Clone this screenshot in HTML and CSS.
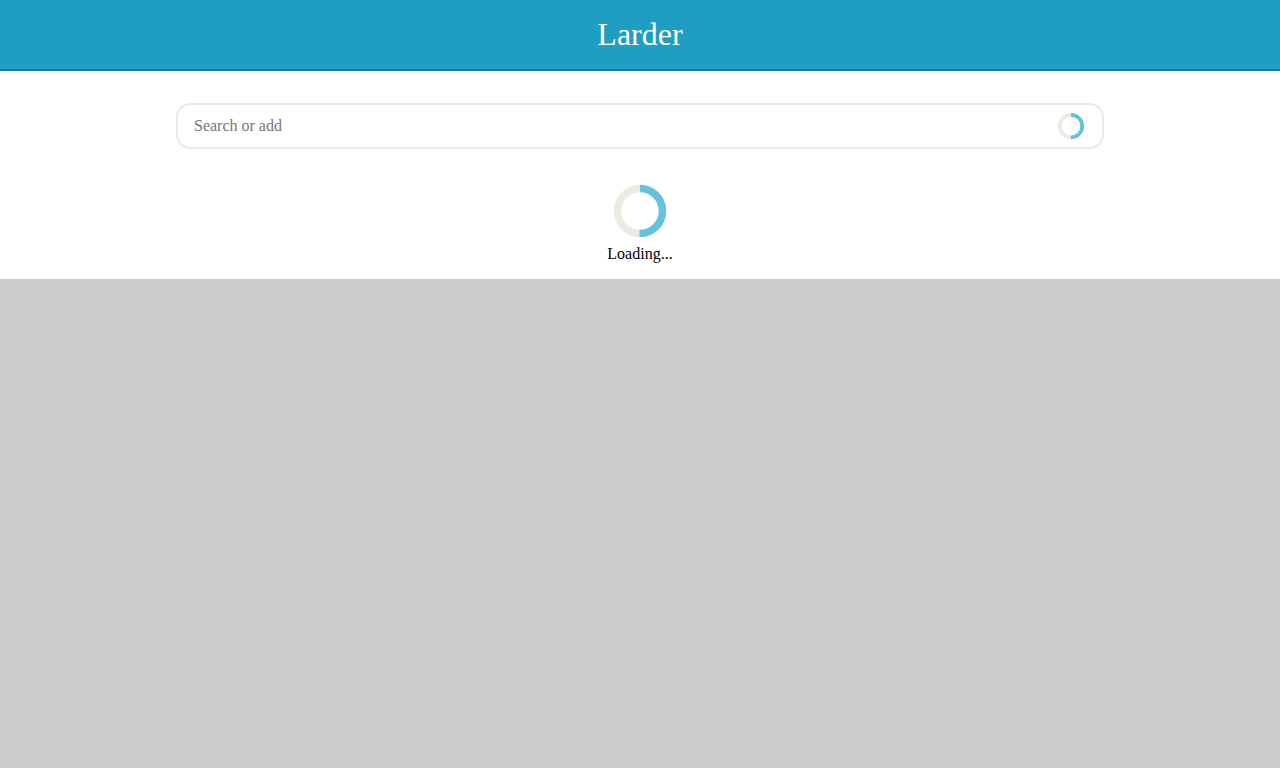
FILE: index.html
```html
<!DOCTYPE html>
<html lang="en">
<head>
<meta charset="utf-8">
<meta name="viewport" content="width=device-width, initial-scale=1">
<title>Larder</title>
<link rel="stylesheet" href="styles.css">
</head>
<body>
<header class="header">
  <h1 class="title">Larder</h1>
</header>
<main class="main">
  <form class="search">
    <input class="search-input" type="text" placeholder="Search or add" aria-label="Search or add">
    <svg class="spinner-small" viewBox="0 0 56 56" aria-hidden="true">
      <circle cx="28" cy="28" r="22.5" fill="none" stroke="#edebe1" stroke-width="7.5"/>
      <path d="M28 5.5a22.5 22.5 0 0 1 0 45h-.5" fill="none" stroke="#66c2dc" stroke-width="7.5"/>
    </svg>
  </form>
  <div class="loading" role="status">
    <svg class="spinner-large" viewBox="0 0 56 56" aria-hidden="true">
      <circle cx="28" cy="28" r="22.5" fill="none" stroke="#edebe1" stroke-width="7.5"/>
      <path d="M28 5.5a22.5 22.5 0 0 1 0 45h-.5" fill="none" stroke="#66c2dc" stroke-width="7.5"/>
    </svg>
    <p class="loading-text">Loading...</p>
  </div>
</main>
</body>
</html>
```
FILE: styles.css
```css
* {
  box-sizing: border-box;
}

html {
  background: #cccccc;
}

body {
  margin: 0;
  background: #ffffff;
  color: #000000;
  font: 16px/18px "Liberation Serif", "Times New Roman", serif;
}

.header {
  padding: 16px;
  background: #1e9ec2;
  border-bottom: 2px solid #187e9b;
  text-align: center;
}

.title {
  margin: 0;
  color: #ffffff;
  font-size: 32px;
  font-weight: 400;
  line-height: 37px;
}

.main {
  max-width: 960px;
  margin: 0 auto;
  padding: 32px 16px 16px;
}

.search {
  display: flex;
  align-items: center;
  padding-right: 17px;
  border: 2px solid #edebe1;
  border-radius: 14px;
}

.search-input {
  flex: 1;
  min-width: 0;
  padding: 12px 16px;
  border: 0;
  outline: 0;
  background: transparent;
  color: inherit;
  font: inherit;
}

.search-input::placeholder {
  color: #757575;
}

.spinner-small {
  width: 28px;
  height: 28px;
}

.loading {
  display: flex;
  flex-direction: column;
  align-items: center;
  gap: 6px;
  padding-top: 34px;
}

.spinner-large {
  width: 56px;
  height: 56px;
}

.loading-text {
  margin: 0;
}
```
